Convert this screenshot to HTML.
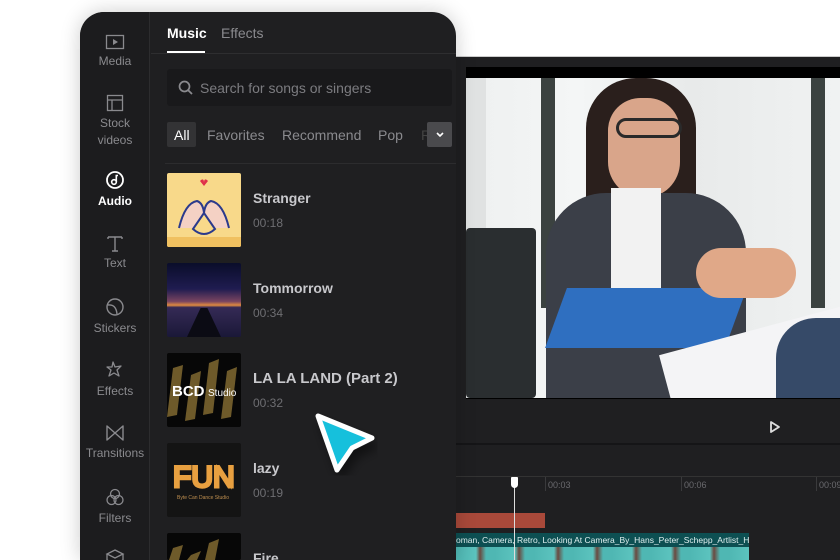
<!DOCTYPE html><html><head><style>
*{margin:0;padding:0;box-sizing:border-box}
html,body{width:840px;height:560px;overflow:hidden}
body{background:#fff;position:relative;font-family:"Liberation Sans",sans-serif}
.back{position:absolute;left:440px;top:56px;width:400px;height:504px;background:#1f1f21;border-top:1px solid #ccc}
.video{position:absolute;left:466px;top:67px;width:374px;height:332px;background:#000}
.img{position:absolute;left:466px;top:78px;width:374px;height:320px;background:linear-gradient(90deg,#eef0f0 0,#f4f6f6 30%,#e8eaea 60%,#f0f2f2 100%);overflow:hidden}
.panel{position:absolute;left:80px;top:12px;width:376px;height:548px;background:#1f1f21;border-radius:24px 24px 0 0;overflow:hidden;box-shadow:0 0 20px rgba(0,0,0,.2)}
.side{position:absolute;left:0;top:0;width:70px;height:100%;background:#1c1c1e;border-right:1px solid #2c2c2e}
.si{position:absolute;left:0;width:70px;text-align:center;color:#8a8a8e;font-size:12px;line-height:17px}
.si svg{display:block;margin:0 auto 3px}
.tab{position:absolute;top:13px;font-size:14px}
.th{position:absolute;left:87px;width:74px;height:74px;border-radius:2px;overflow:hidden}
.tt{position:absolute;left:173px;color:#c8c8cc;font-size:14px;font-weight:bold}
.td{position:absolute;left:173px;color:#6e6e72;font-size:12px}
.chip{position:absolute;top:115px;font-size:14px;color:#8a8a8e}
</style></head><body>
<div class="back"></div>
<div class="video"></div>
<div class="img">
 <div style="position:absolute;left:-10px;top:0;width:30px;height:320px;background:#e0e2e2"></div>
 <div style="position:absolute;left:75px;top:0;width:14px;height:230px;background:#3b4240"></div>
 <div style="position:absolute;left:345px;top:0;width:14px;height:230px;background:#3b4240"></div>
 <div style="position:absolute;left:0;top:150px;width:70px;height:170px;background:#2a2e30;border-radius:4px"></div>
 <div style="position:absolute;left:120px;top:0;width:110px;height:140px;background:#2a1f1c;border-radius:50px 50px 10px 10px"></div>
 <div style="position:absolute;left:142px;top:20px;width:72px;height:100px;background:#d9a58a;border-radius:36px 36px 40px 40px"></div>
 <div style="position:absolute;left:150px;top:40px;width:66px;height:20px;border:3px solid #2a2a2a;border-radius:12px"></div>
 <div style="position:absolute;left:80px;top:115px;width:200px;height:220px;background:#3b3f48;border-radius:60px 60px 0 0"></div>
 <div style="position:absolute;left:145px;top:110px;width:50px;height:130px;background:#f2f2f2"></div>
 <div style="position:absolute;left:90px;top:210px;width:180px;height:60px;background:#2f6fc0;transform:skewX(-20deg)"></div>
 <div style="position:absolute;left:230px;top:170px;width:100px;height:50px;background:#e0a888;border-radius:30px"></div>
 <div style="position:absolute;left:200px;top:250px;width:200px;height:80px;background:#f4f4f6;transform:rotate(-15deg)"></div>
 <div style="position:absolute;left:310px;top:240px;width:80px;height:90px;background:#364a68;border-radius:40px 0 0 0"></div>
</div>
<svg style="position:absolute;left:769px;top:420px" width="12" height="14"><path d="M2 2 L10 7 L2 12 Z" fill="none" stroke="#ddd" stroke-width="1.8" stroke-linejoin="round"/></svg>
<div style="position:absolute;left:456px;top:443px;width:384px;height:2px;background:#151517"></div>
<div style="position:absolute;left:456px;top:476px;width:384px;height:1px;background:#333"></div>
<div style="position:absolute;left:545px;top:477px;width:1px;height:14px;background:#3a3a3c"></div>
<div style="position:absolute;left:681px;top:477px;width:1px;height:14px;background:#3a3a3c"></div>
<div style="position:absolute;left:816px;top:477px;width:1px;height:14px;background:#3a3a3c"></div>
<div style="position:absolute;left:548px;top:480px;font-size:9px;color:#6a6a6e">00:03</div>
<div style="position:absolute;left:684px;top:480px;font-size:9px;color:#6a6a6e">00:06</div>
<div style="position:absolute;left:819px;top:480px;font-size:9px;color:#6a6a6e">00:09</div>
<div style="position:absolute;left:456px;top:513px;width:89px;height:15px;background:#a9493a"></div>
<div style="position:absolute;left:456px;top:533px;width:293px;height:14px;background:#0d4f52;color:#e0f0f0;font-size:8.5px;line-height:14px;white-space:nowrap;overflow:hidden">oman, Camera, Retro, Looking At Camera_By_Hans_Peter_Schepp_Artlist_HD.mp</div>
<div style="position:absolute;left:456px;top:547px;width:293px;height:13px;background:repeating-linear-gradient(90deg,#4fb7b3 0,#5cc3be 20px,#6a4a40 24px,#4fb7b3 30px,#4fb7b3 39px)"></div>
<div style="position:absolute;left:514px;top:478px;width:1px;height:82px;background:#ddd"></div>
<div style="position:absolute;left:511px;top:477px;width:7px;height:11px;background:#fff;border-radius:1px 1px 4px 4px"></div>

<div class="panel">
 <div class="side">
  <div class="si" style="top:22px;"><svg width="20" height="16"><rect x="1.5" y="1.5" width="17" height="13" fill="none" stroke="#8a8a8e" stroke-width="1.3"/><path d="M8 5 L13 8 L8 11Z" fill="#8a8a8e"/></svg>Media</div>
  <div class="si" style="top:82px;"><svg width="18" height="18"><rect x="1.5" y="1.5" width="15" height="15" fill="none" stroke="#8a8a8e" stroke-width="1.3"/><path d="M1.5 6 H16.5 M6 6 V16.5" stroke="#8a8a8e" stroke-width="1.3"/></svg>Stock<br>videos</div>
  <div class="si" style="top:158px;color:#fff;font-weight:bold"><svg width="20" height="20"><circle cx="10" cy="10" r="8" fill="none" stroke="#fff" stroke-width="1.8"/><circle cx="9" cy="12" r="2.3" fill="none" stroke="#fff" stroke-width="1.6"/><path d="M11.3 12 V5.5 H13" fill="none" stroke="#fff" stroke-width="1.6"/></svg>Audio</div>
  <div class="si" style="top:222px;"><svg width="18" height="18"><path d="M2 3 H16 M9 3 V17 M2 3 V5 M16 3 V5 M6 17 H12" stroke="#8a8a8e" stroke-width="1.4" fill="none"/></svg>Text</div>
  <div class="si" style="top:285px;"><svg width="20" height="20"><circle cx="10" cy="10" r="8" fill="none" stroke="#8a8a8e" stroke-width="1.4"/><path d="M3 8 Q11 7 12 17" fill="none" stroke="#8a8a8e" stroke-width="1.4"/></svg>Stickers</div>
  <div class="si" style="top:348px;"><svg width="20" height="20"><path d="M8 2 L10 7 L16 6 L12 10 L14 16 L9 13 L4 16 L6 10 L2 7 L7 7Z" fill="none" stroke="#8a8a8e" stroke-width="1.3" stroke-linejoin="round"/></svg>Effects</div>
  <div class="si" style="top:412px;"><svg width="20" height="18"><path d="M2 2 L18 16 V2 L2 16Z" fill="none" stroke="#8a8a8e" stroke-width="1.4" stroke-linejoin="round"/></svg>Transitions</div>
  <div class="si" style="top:475px;"><svg width="20" height="20"><circle cx="10" cy="7" r="4.5" fill="none" stroke="#8a8a8e" stroke-width="1.3"/><circle cx="6.5" cy="13" r="4.5" fill="none" stroke="#8a8a8e" stroke-width="1.3"/><circle cx="13.5" cy="13" r="4.5" fill="none" stroke="#8a8a8e" stroke-width="1.3"/></svg>Filters</div>
  <div class="si" style="top:536px;"><svg width="20" height="14"><path d="M10 2 L18 6 L10 10 L2 6Z M2 6 V12 L10 16 L18 12 V6" fill="none" stroke="#8a8a8e" stroke-width="1.3"/></svg></div>
 </div>
 <div class="tab" style="left:87px;color:#fff;font-weight:bold">Music</div>
 <div style="position:absolute;left:87px;top:39px;width:38px;height:2px;background:#fff"></div>
 <div class="tab" style="left:141px;color:#8a8a8e">Effects</div>
 <div style="position:absolute;left:71px;top:41px;width:305px;height:1px;background:#2e2e30"></div>
 <div style="position:absolute;left:87px;top:57px;width:285px;height:37px;background:#19191b;border-radius:3px"></div>
 <svg style="position:absolute;left:98px;top:68px" width="16" height="16"><circle cx="6.5" cy="6.5" r="5" fill="none" stroke="#8a8a8e" stroke-width="1.7"/><path d="M10.2 10.2 L14 14" stroke="#8a8a8e" stroke-width="1.8"/></svg>
 <div style="position:absolute;left:120px;top:68px;color:#7c7c80;font-size:14px">Search for songs or singers</div>
 <div style="position:absolute;left:87px;top:110px;width:29px;height:25px;background:#333335;border-radius:2px"></div>
 <div class="chip" style="left:94px;color:#fff">All</div>
 <div class="chip" style="left:127px">Favorites</div>
 <div class="chip" style="left:202px">Recommend</div>
 <div class="chip" style="left:298px">Pop</div>
 <div class="chip" style="left:341px;color:#444">R</div>
 <div style="position:absolute;left:347px;top:110px;width:25px;height:25px;background:#4a4a4d;border-radius:2px"></div>
 <svg style="position:absolute;left:355px;top:119px" width="10" height="8"><path d="M2 2 L5 5 L8 2" fill="none" stroke="#fff" stroke-width="1.6"/></svg>
 <div style="position:absolute;left:85px;top:151px;width:291px;height:1px;background:#2c2c2e"></div>

 <div class="th" style="top:161px;background:#f8d98a"><svg width="74" height="74"><path d="M12 55 Q18 30 30 28 Q36 30 37 40 Q38 30 44 28 Q56 30 62 55" fill="#f4d1c4" stroke="#2b3a8c" stroke-width="2"/><path d="M37 40 L26 56 Q37 66 48 56Z" fill="#f8d98a" stroke="#2b3a8c" stroke-width="2"/><path d="M33 8 Q37 4 37 10 Q37 4 41 8 L37 13Z" fill="#e0304a"/><rect y="64" width="74" height="10" fill="#f0c060"/></svg></div>
 <div class="tt" style="top:178px">Stranger</div><div class="td" style="top:204px">00:18</div>

 <div class="th" style="top:251px;background:linear-gradient(180deg,#0a0d2a 0,#1f1c50 35%,#7a4560 52%,#e08a40 57%,#352a55 60%,#1a1838 100%)"><div style="position:absolute;left:20px;top:45px;width:34px;height:29px;background:#0b0b14;clip-path:polygon(40% 0,60% 0,100% 100%,0 100%)"></div></div>
 <div class="tt" style="top:268px">Tommorrow</div><div class="td" style="top:294px">00:34</div>

 <div class="th" style="top:341px;background:#070707"><svg width="74" height="74"><g fill="#6e5a2a"><path d="M6 15 L16 12 L10 62 L0 64Z"/><path d="M24 22 L34 18 L28 66 L18 68Z"/><path d="M42 10 L52 6 L46 60 L36 62Z"/><path d="M60 18 L70 14 L64 64 L54 66Z"/></g><text x="5" y="43" fill="#fff" font-family="Liberation Sans" font-weight="bold" font-size="15">BCD</text><text x="41" y="43" fill="#fff" font-family="Liberation Sans" font-size="10">Studio</text></svg></div>
 <div class="tt" style="top:358px;font-size:15px">LA LA LAND (Part 2)</div><div class="td" style="top:384px">00:32</div>

 <div class="th" style="top:431px;background:#141414"><svg width="74" height="74"><text x="6" y="44" font-family="Liberation Sans" font-size="30" fill="none" stroke="#e8a040" stroke-width="3">FUN</text><text x="10" y="56" font-size="5" fill="#c09050" font-family="Liberation Sans">Byte Can Dance Studio</text></svg></div>
 <div class="tt" style="top:448px">lazy</div><div class="td" style="top:474px">00:19</div>

 <div class="th" style="top:521px;height:27px;background:#070707"><svg width="74" height="27"><g fill="#6e5a2a"><path d="M6 15 L16 12 L12 27 L2 27Z"/><path d="M24 22 L34 18 L30 27 L20 27Z"/><path d="M42 10 L52 6 L48 27 L38 27Z"/></g></svg></div>
 <div class="tt" style="top:538px">Fire</div>
</div>
<svg style="position:absolute;left:308px;top:408px" width="80" height="70"><defs><filter id="s"><feDropShadow dx="4" dy="8" stdDeviation="5" flood-opacity="0.45"/></filter></defs><path d="M10 8 L64 30 L44 40 L29 62 Z" fill="#18c0dc" stroke="#fff" stroke-width="5" stroke-linejoin="round" filter="url(#s)"/></svg>
</body></html>
